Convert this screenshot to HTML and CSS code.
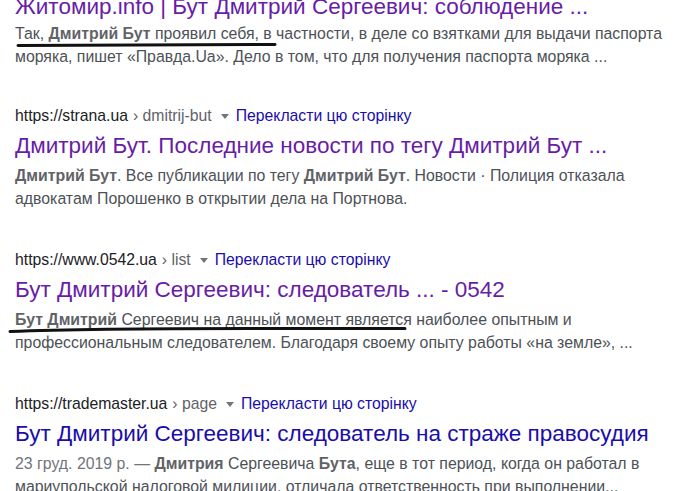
FILE: index.html
```html
<!DOCTYPE html>
<html lang="ru">
<head>
<meta charset="utf-8">
<title>Дмитрий Бут</title>
<link rel="stylesheet" href="styles.css">
</head>
<body>
<div class="page">
  <div class="result first">
    <h3 class="title visited">Житомир.info | Бут Дмитрий Сергеевич: соблюдение ...</h3>
    <div class="snippet">Так, <b>Дмитрий Бут</b> проявил себя, в частности, в деле со взятками для выдачи паспорта моряка, пишет «Правда.Ua». Дело в том, что для получения паспорта моряка ...</div>
  </div>

  <div class="result">
    <div class="cite"><span class="host">https://strana.ua</span><span class="path">› dmitrij-but</span><span class="caret"></span><span class="translate">Перекласти цю сторінку</span></div>
    <h3 class="title visited">Дмитрий Бут. Последние новости по тегу Дмитрий Бут ...</h3>
    <div class="snippet"><b>Дмитрий Бут</b>. Все публикации по тегу <b>Дмитрий Бут</b>. Новости · Полиция отказала адвокатам Порошенко в открытии дела на Портнова.</div>
  </div>

  <div class="result">
    <div class="cite"><span class="host">https://www.0542.ua</span><span class="path">› list</span><span class="caret"></span><span class="translate">Перекласти цю сторінку</span></div>
    <h3 class="title visited">Бут Дмитрий Сергеевич: следователь ... - 0542</h3>
    <div class="snippet"><b>Бут Дмитрий</b> Сергеевич на данный момент является наиболее опытным и профессиональным следователем. Благодаря своему опыту работы «на земле», ...</div>
  </div>

  <div class="result">
    <div class="cite"><span class="host">https://trademaster.ua</span><span class="path">› page</span><span class="caret"></span><span class="translate">Перекласти цю сторінку</span></div>
    <h3 class="title">Бут Дмитрий Сергеевич: следователь на страже правосудия</h3>
    <div class="snippet"><span class="date">23 груд. 2019 р. — </span><b>Дмитрия</b> Сергеевича <b>Бута</b>, еще в тот период, когда он работал в мариупольской налоговой милиции, отличала ответственность при выполнении...</div>
  </div>

  <svg class="marks" width="700" height="491" viewBox="0 0 700 491" aria-hidden="true">
    <path d="M18 45.5 C 80 46 160 44.5 275 44.5" />
    <path d="M10 331.5 C 60 329.5 140 328.5 250 328.5 L 405 328.5" />
  </svg>
</div>
</body>
</html>
```

FILE: styles.css
```css
html, body {
  margin: 0;
  padding: 0;
  background: #ffffff;
  overflow: hidden;
}

body {
  width: 700px;
  height: 491px;
  font-family: "Liberation Sans", Arial, sans-serif;
}

.page {
  position: relative;
  width: 700px;
  height: 491px;
  padding: 1px 0 0 15px;
  box-sizing: border-box;
  display: flex;
  flex-direction: column;
}

.result {
  width: 665px;
  display: flex;
  flex-direction: column;
  margin-bottom: 38px;
  flex-shrink: 0;
}

.result.first {
  margin-top: -8px;
  margin-bottom: 36px;
}

.cite {
  font-size: 15.75px;
  line-height: 23px;
  height: 23px;
  display: flex;
  align-items: center;
  white-space: nowrap;
}

.host {
  color: #202124;
}

.path {
  color: #5f6368;
  margin-left: 5px;
}

.caret {
  width: 0;
  height: 0;
  border-left: 4.5px solid transparent;
  border-right: 4.5px solid transparent;
  border-top: 5px solid #70757a;
  margin: 1px 7px 0 9px;
}

.translate {
  color: #1a0dab;
}

.title {
  margin: 5px 0 0 0;
  font-size: 22.5px;
  font-weight: normal;
  line-height: 28px;
  color: #1a0dab;
  white-space: nowrap;
}

.first .title {
  margin-top: 0;
}

.title.visited {
  color: #681da8;
}

.snippet {
  margin-top: 4px;
  font-size: 15.85px;
  line-height: 23px;
  color: #4d5156;
}

.first .snippet {
  margin-top: 1px;
}

.snippet b {
  color: #5f6368;
  font-weight: bold;
}

.date {
  color: #70757a;
}

.marks {
  position: absolute;
  top: 0;
  left: 0;
  pointer-events: none;
}

.marks path {
  fill: none;
  stroke: #111111;
  stroke-width: 3;
  stroke-linecap: round;
}
```
